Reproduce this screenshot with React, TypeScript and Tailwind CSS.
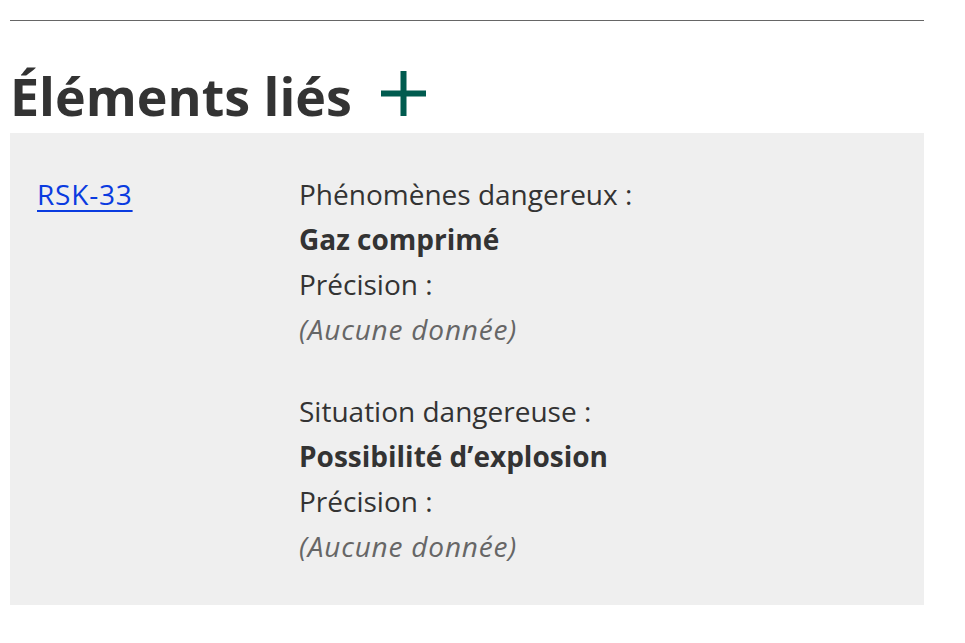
const items = [
  { label: 'Phénomènes dangereux :', value: 'Gaz comprimé' },
  { label: 'Situation dangereuse :', value: 'Possibilité d’explosion' },
]

function PlusIcon() {
  return (
    <svg width="45" height="45" viewBox="0 0 45 45" className="ml-[29px] mb-[6px]">
      <rect x="19.5" y="0" width="6" height="45" fill="#005b4f" />
      <rect x="0" y="19.5" width="45" height="6" fill="#005b4f" />
    </svg>
  )
}

export default function App() {
  return (
    <div className="min-h-screen bg-white pl-[10px] pr-[41px] pt-5 text-[#333]" style={{ fontFamily: '"Open Sans", "Noto Sans", sans-serif' }}>
      <hr className="border-0 border-t border-[#666]" />
      <h2 className="mt-[38px] flex items-center text-[52px] font-bold leading-[74px]">
        Éléments liés
        <PlusIcon />
      </h2>
      <div className="grid grid-cols-[262px_1fr] bg-[#efefef] px-[27px] pt-[39px] pb-[36px] text-[28px] leading-[45px]">
        <div>
          <a href="#" className="text-[#0a3be0] tracking-[0.8px] underline decoration-2 underline-offset-[5px]">RSK-33</a>
        </div>
        <div className="flex flex-col gap-[37px]">
          {items.map((it) => (
            <div key={it.label} className="flex flex-col">
              <span>{it.label}</span>
              <span className="font-bold">{it.value}</span>
              <span>Précision :</span>
              <span className="italic tracking-[0.8px] text-[#666]">(Aucune donnée)</span>
            </div>
          ))}
        </div>
      </div>
    </div>
  )
}
